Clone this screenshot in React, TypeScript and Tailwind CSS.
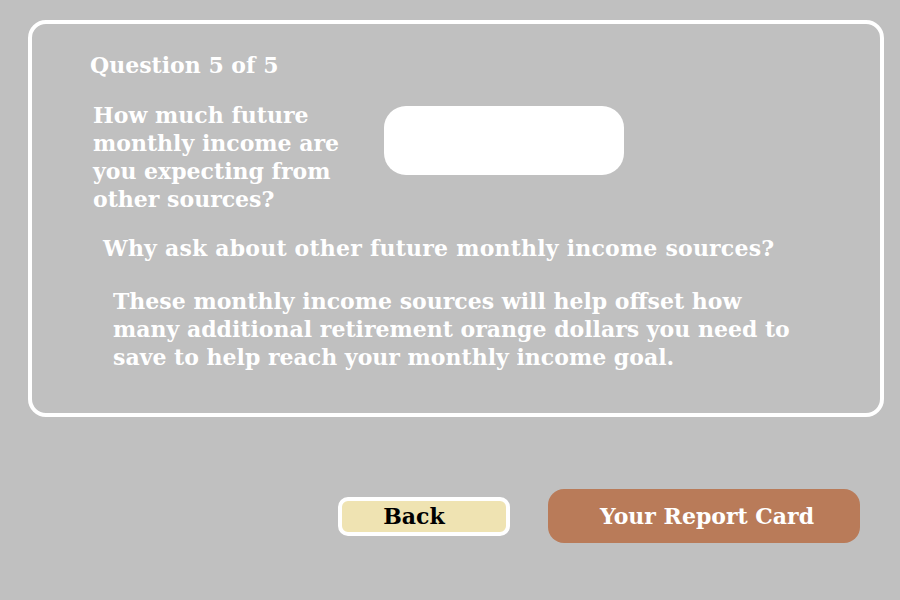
export default function App() {
  return (
    <div
      className="w-[900px] h-[600px] bg-[#c0c0c0] pt-[20px] pl-[28px] overflow-hidden"
      style={{ fontFamily: '"DejaVu Serif", "Liberation Serif", serif' }}
    >
      <div className="w-[856px] h-[397px] border-4 border-white rounded-[18px] pl-[58px] pt-[27px] text-white font-bold text-[22px] leading-[28px] whitespace-nowrap">
        <div>Question 5 of 5</div>

        <div className="flex flex-row items-start mt-[22px]">
          <div className="w-[288px] ml-[3px]">
            How much future
            <br />
            monthly income are
            <br />
            you expecting from
            <br />
            other sources?
          </div>
          <input
            type="text"
            className="ml-[3px] mt-[5px] w-[240px] h-[69px] bg-white rounded-[22px] outline-none"
          />
        </div>

        <div className="ml-[13px] mt-[21px] tracking-[0.2px]">
          Why ask about other future monthly income sources?
        </div>

        <div className="ml-[23px] mt-[25px]">
          These monthly income sources will help offset how
          <br />
          many additional retirement orange dollars you need to
          <br />
          save to help reach your monthly income goal.
        </div>
      </div>

      <div className="flex flex-row items-center mt-[72px] ml-[310px]">
        <button className="w-[172px] h-[39px] border-4 border-white bg-[#efe3b2] rounded-[10px] text-black font-bold text-[22px] leading-none pr-[20px]">
          Back
        </button>
        <button className="ml-[38px] w-[312px] h-[54px] bg-[#b97b59] rounded-[16px] text-white font-bold text-[22px] leading-none pl-[6px]">
          Your Report Card
        </button>
      </div>
    </div>
  )
}
